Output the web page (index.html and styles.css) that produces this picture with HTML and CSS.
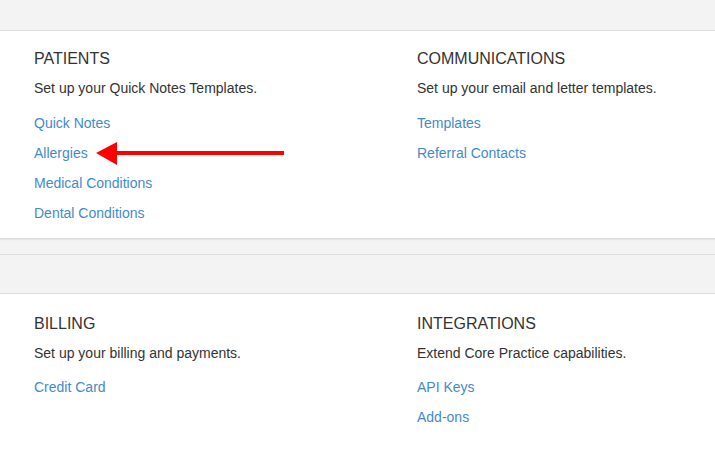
FILE: index.html
```html
<!DOCTYPE html>
<html lang="en">
<head>
<meta charset="utf-8">
<title>Settings</title>
<link rel="stylesheet" href="styles.css">
</head>
<body>
<div class="page">
  <section class="panel panel-first">
    <div class="panel-heading"></div>
    <div class="panel-body">
      <div class="group">
        <h3 class="group-title">PATIENTS</h3>
        <p class="group-desc">Set up your Quick Notes Templates.</p>
        <ul class="links">
          <li><a href="#">Quick Notes</a></li>
          <li><a href="#">Allergies</a></li>
          <li><a href="#">Medical Conditions</a></li>
          <li><a href="#">Dental Conditions</a></li>
        </ul>
      </div>
      <div class="group">
        <h3 class="group-title">COMMUNICATIONS</h3>
        <p class="group-desc">Set up your email and letter templates.</p>
        <ul class="links">
          <li><a href="#">Templates</a></li>
          <li><a href="#">Referral Contacts</a></li>
        </ul>
      </div>
    </div>
  </section>
  <section class="panel panel-second">
    <div class="panel-heading"></div>
    <div class="panel-body">
      <div class="group">
        <h3 class="group-title">BILLING</h3>
        <p class="group-desc">Set up your billing and payments.</p>
        <ul class="links">
          <li><a href="#">Credit Card</a></li>
        </ul>
      </div>
      <div class="group">
        <h3 class="group-title">INTEGRATIONS</h3>
        <p class="group-desc">Extend Core Practice capabilities.</p>
        <ul class="links">
          <li><a href="#">API Keys</a></li>
          <li><a href="#">Add-ons</a></li>
        </ul>
      </div>
    </div>
  </section>
  <svg class="arrow" width="188" height="23" viewBox="0 0 188 23" aria-hidden="true">
    <polygon points="0,11 21,0 21,23" fill="#ff0000"/>
    <rect x="20" y="9" width="168" height="4" fill="#ff0000"/>
  </svg>
</div>
</body>
</html>
```

FILE: styles.css
```css
html, body {
  margin: 0;
  padding: 0;
}

body {
  background: #f3f3f3;
  font-family: "Liberation Sans", Arial, Helvetica, sans-serif;
  font-size: 14px;
  color: #333333;
}

.page {
  position: relative;
}

.panel {
  background: #ffffff;
}

.panel-first {
  margin-bottom: 15px;
  border-bottom: 1px solid #dddddd;
  box-shadow: 0 1px 1px rgba(0, 0, 0, 0.05);
}

.panel-second {
  border-top: 1px solid #dddddd;
}

.panel-heading {
  background: #f3f3f3;
  border-bottom: 1px solid #dddddd;
}

.panel-first .panel-heading {
  height: 30px;
}

.panel-second .panel-heading {
  height: 38px;
}

.panel-body {
  display: grid;
  grid-template-columns: 383px 1fr;
  padding: 18px 0 10px 34px;
}

.panel-second .panel-body {
  padding-top: 20px;
  padding-bottom: 19px;
}

.group-title {
  margin: 0;
  font-size: 16px;
  font-weight: normal;
  line-height: 20px;
  color: #333333;
}

.group-desc {
  margin: 9px 0 10px;
  font-size: 14px;
  line-height: 20px;
}

.panel-second .group-desc {
  margin-bottom: 9px;
}

.links {
  list-style: none;
  margin: 0;
  padding: 0;
}

.links li {
  line-height: 30px;
}

.links a {
  color: #428bca;
  text-decoration: none;
  font-size: 14px;
}

.arrow {
  position: absolute;
  left: 96px;
  top: 142px;
}
```
